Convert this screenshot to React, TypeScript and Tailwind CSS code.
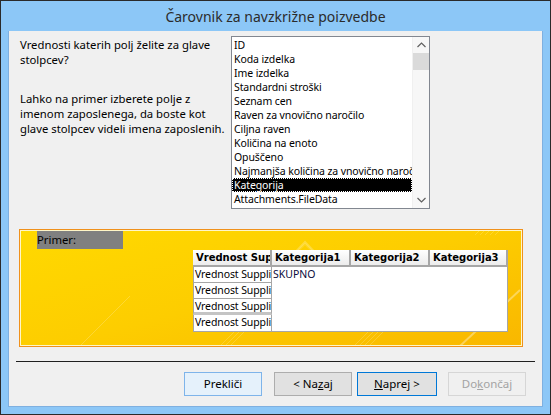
import React from "react";

const ui = { fontFamily: "'Noto Sans', 'DejaVu Sans', sans-serif" };
const bold = { fontFamily: "'DejaVu Sans', 'Noto Sans', sans-serif" };

const fields = [
  "ID",
  "Koda izdelka",
  "Ime izdelka",
  "Standardni stroški",
  "Seznam cen",
  "Raven za vnovično naročilo",
  "Ciljna raven",
  "Količina na enoto",
  "Opuščeno",
  "Najmanjša količina za vnovično naročilo",
  "Kategorija",
  "Attachments.FileData",
  "Attachments.FileName",
];

function Chevron({ up }: { up?: boolean }) {
  return (
    <svg width="9" height="6" viewBox="0 0 9 6">
      <path
        d={up ? "M0.5 5 L4.5 1 L8.5 5" : "M0.5 1 L4.5 5 L8.5 1"}
        fill="none"
        stroke="#606060"
        strokeWidth="1.2"
      />
    </svg>
  );
}

function FieldList() {
  return (
    <div className="flex w-[199px] h-[173px] border border-[#828790] bg-white">
      <div className="flex-1 overflow-hidden pt-px">
        {fields.map((f) => (
          <div
            key={f}
            className={
              "h-[14px] leading-[14px] pl-[2px] whitespace-nowrap text-[10.5px] tracking-[-0.1px] " +
              (f === "Kategorija"
                ? "bg-black text-white outline outline-1 outline-dotted outline-white -outline-offset-1"
                : "text-black")
            }
          >
            {f}
          </div>
        ))}
      </div>
      <div className="w-[17px] flex flex-col bg-[#f7f7f7] border-l border-[#f0f0f0]">
        <div className="h-[16px] flex items-center justify-center">
          <Chevron up />
        </div>
        <div className="h-[17px] bg-[#dadada]" />
        <div className="flex-1" />
        <div className="h-[17px] flex items-center justify-center">
          <Chevron />
        </div>
      </div>
    </div>
  );
}

function HeadCell({ w, children }: { w: string; children: React.ReactNode }) {
  return (
    <div
      className={
        w +
        " h-[17px] leading-[15px] px-[3px] overflow-hidden whitespace-nowrap text-[10px] font-bold text-black bg-[linear-gradient(#ffffff,#ececec)] border-r-2 border-b-2 border-[#a6a6a6]"
      }
      style={bold}
    >
      {children}
    </div>
  );
}

function Sample() {
  const rows = [
    "h-[16px] border-b",
    "h-[16px] border-b",
    "h-[16px] border-b-[3px] border-b-[#c4c4c4]",
    "h-[17px] border-b",
  ];
  return (
    <div className="flex mt-px ml-[172px]">
      <div className="flex flex-col w-[79px]">
        <HeadCell w="w-[79px]">Vrednost Supplier</HeadCell>
        {rows.map((h, i) => (
          <div
            key={i}
            className={
              h +
              " leading-[15px] bg-white border-x border-[#a6a6a6] overflow-hidden whitespace-nowrap text-[10.5px] tracking-[-0.1px] text-black pl-px"
            }
          >
            Vrednost Supplier
          </div>
        ))}
      </div>
      <div className="flex flex-col w-[236px]">
        <div className="flex">
          <HeadCell w="w-[79px]">Kategorija1</HeadCell>
          <HeadCell w="w-[79px]">Kategorija2</HeadCell>
          <HeadCell w="w-[78px]">Kategorija3</HeadCell>
        </div>
        <div className="h-[65px] bg-white border border-t-0 border-l-0 border-[#a6a6a6] text-[10.5px] leading-[15px] text-[#0b0b3b] pl-px">
          SKUPNO
        </div>
      </div>
    </div>
  );
}

function Btn({
  children,
  cls,
  ml,
}: {
  children: React.ReactNode;
  cls: string;
  ml: string;
}) {
  return (
    <div
      className={
        ml +
        " w-[78px] h-[24px] flex items-center justify-center text-[11.5px] border " +
        cls
      }
    >
      {children}
    </div>
  );
}

export default function App() {
  return (
    <div
      className="w-[551px] h-[415px] bg-[#8cc7f7] border border-[#2a2a2a] flex flex-col"
      style={ui}
    >
      <div className="h-[30px] flex items-center justify-center text-[14px] text-[#2b2b2b] pt-[1px]">
        Čarovnik za navzkrižne poizvedbe
      </div>
      <div className="mx-[7px] h-[376px] bg-[#f0f0f0] border border-[#7fb0e0] border-t-0 flex flex-col">
        <div className="flex pt-[5px]">
          <div className="w-[222px] pl-[11px] text-[11.3px] leading-[15px] text-black whitespace-nowrap">
            <div className="mt-[1px]">
              Vrednosti katerih polj želite za glave
              <br />
              stolpcev?
            </div>
            <div className="mt-[24px]">
              Lahko na primer izberete polje z
              <br />
              imenom zaposlenega, da boste kot
              <br />
              glave stolpcev videli imena zaposlenih.
            </div>
          </div>
          <FieldList />
        </div>

        <div className="ml-[10px] w-[504px] h-[118px] mt-[20px] border border-[#f0911c] relative overflow-hidden bg-[linear-gradient(165deg,#ffd900_0%,#fdcd00_50%,#f9b700_100%)]">
          <svg
            className="absolute inset-0"
            width="502"
            height="116"
            viewBox="0 0 502 116"
          >
            <g stroke="#ffffff" strokeOpacity="0.22" strokeWidth="2" fill="none">
              <path d="M262 36 L285 12 L308 36" />
              <path d="M252 46 L285 14 L318 46" strokeOpacity="0.12" />
            </g>
            <g stroke="#ffffff" strokeOpacity="0.18" strokeWidth="1">
              <path d="M455 5 L475 -15 M460 5 L480 -15 M465 5 L485 -15 M470 5 L490 -15 M475 5 L495 -15" />
              <path d="M330 120 L350 100 M335 120 L355 100 M340 120 L360 100 M345 120 L365 100" />
              <path d="M440 116 L500 60" strokeOpacity="0.35" strokeWidth="2" />
              <path d="M60 116 L110 66" strokeOpacity="0.2" />
              <path d="M200 116 L230 86 M205 116 L235 86 M210 116 L240 86" />
            </g>
          </svg>
          <div className="relative h-full border border-[#fff6c8]">
            <div className="ml-[16px] w-[86px] h-[18px] bg-[#808080] text-[11.3px] leading-[18px] text-black">
              Primer:
            </div>
            <Sample />
          </div>
        </div>

        <div className="mx-[7px] mt-[14px] h-px bg-[#1f1f1f]" />

        <div className="flex mt-[10px] pl-[175px] text-black">
          <Btn ml="" cls="bg-[#e5f1fb] border-[#7eb4ea]">
            Prekliči
          </Btn>
          <Btn ml="ml-[12px]" cls="bg-[#e1e1e1] border-[#adadad]">
            &lt; Na<span className="underline">z</span>aj
          </Btn>
          <Btn ml="ml-[5px] !w-[80px]" cls="bg-[#e1e1e1] border-[#0078d7]">
            <span className="underline">N</span>aprej &gt;
          </Btn>
          <Btn ml="ml-[11px]" cls="bg-[#f0f0f0] border-[#d6d6d6] text-[#a3a3a3]">
            Do<span className="underline">k</span>ončaj
          </Btn>
        </div>
      </div>
    </div>
  );
}
